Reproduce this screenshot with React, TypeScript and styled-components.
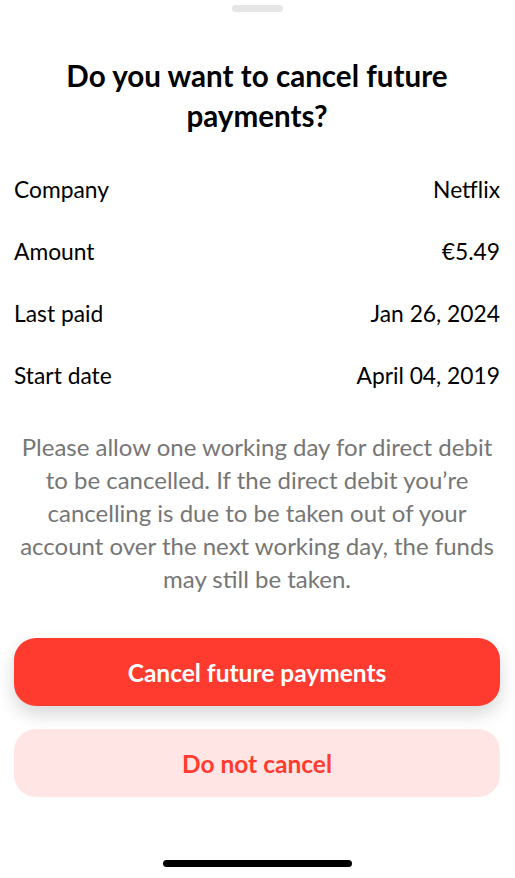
import React from "react";
import styled, { createGlobalStyle } from "styled-components";

const Global = createGlobalStyle`
  html, body { margin: 0; padding: 0; background: #ffffff; }
  body { font-family: Lato, "Open Sans", "Liberation Sans", sans-serif; -webkit-font-smoothing: antialiased; }
  * { box-sizing: border-box; }
`;

const Sheet = styled.div`
  width: 515px;
  height: 878px;
  display: flex;
  flex-direction: column;
  align-items: stretch;
  padding: 5px 15px 0 14px;
  background: #fff;
`;

const Handle = styled.div`
  align-self: center;
  width: 51px;
  height: 7px;
  border-radius: 4px;
  background: #e6e6e6;
`;

const Title = styled.h1`
  margin: 44px 0 0;
  font-size: 29.6px;
  line-height: 40px;
  font-weight: 700;
  color: #000;
  text-align: center;
  padding: 0 30px;
`;

const Details = styled.div`
  display: flex;
  flex-direction: column;
  margin-top: 22px;
`;

const Row = styled.div`
  display: flex;
  justify-content: space-between;
  align-items: center;
  height: 62px;
  font-size: 22.8px;
  color: #000;
`;

const Note = styled.p`
  margin: 24px 0 0;
  font-size: 24px;
  line-height: 33px;
  color: #767676;
  text-align: center;
  padding: 0 2px;
`;

const Actions = styled.div`
  display: flex;
  flex-direction: column;
  gap: 23px;
  margin-top: 43px;
`;

const Button = styled.button<{ $variant: "primary" | "secondary" }>`
  height: 68px;
  border: none;
  border-radius: 22px;
  font-family: inherit;
  font-size: 24.5px;
  font-weight: 700;
  background: ${(p) => (p.$variant === "primary" ? "#ff3b30" : "#ffe6e5")};
  color: ${(p) => (p.$variant === "primary" ? "#ffffff" : "#ff3b30")};
  box-shadow: ${(p) =>
    p.$variant === "primary" ? "0 8px 18px rgba(0,0,0,0.16)" : "none"};
`;

const Spacer = styled.div`
  flex: 1;
`;

const HomeBar = styled.div`
  align-self: center;
  width: 189px;
  height: 7px;
  border-radius: 4px;
  background: #000;
  margin-bottom: 11px;
`;

const rows = [
  ["Company", "Netflix"],
  ["Amount", "€5.49"],
  ["Last paid", "Jan 26, 2024"],
  ["Start date", "April 04, 2019"],
];

export default function App() {
  return (
    <>
      <Global />
      <Sheet>
        <Handle />
        <Title>Do you want to cancel future payments?</Title>
        <Details>
          {rows.map(([k, v]) => (
            <Row key={k}>
              <span>{k}</span>
              <span>{v}</span>
            </Row>
          ))}
        </Details>
        <Note>
          Please allow one working day for direct debit to be cancelled. If the
          direct debit you’re cancelling is due to be taken out of your account
          over the next working day, the funds may still be taken.
        </Note>
        <Actions>
          <Button $variant="primary">Cancel future payments</Button>
          <Button $variant="secondary">Do not cancel</Button>
        </Actions>
        <Spacer />
        <HomeBar />
      </Sheet>
    </>
  );
}
